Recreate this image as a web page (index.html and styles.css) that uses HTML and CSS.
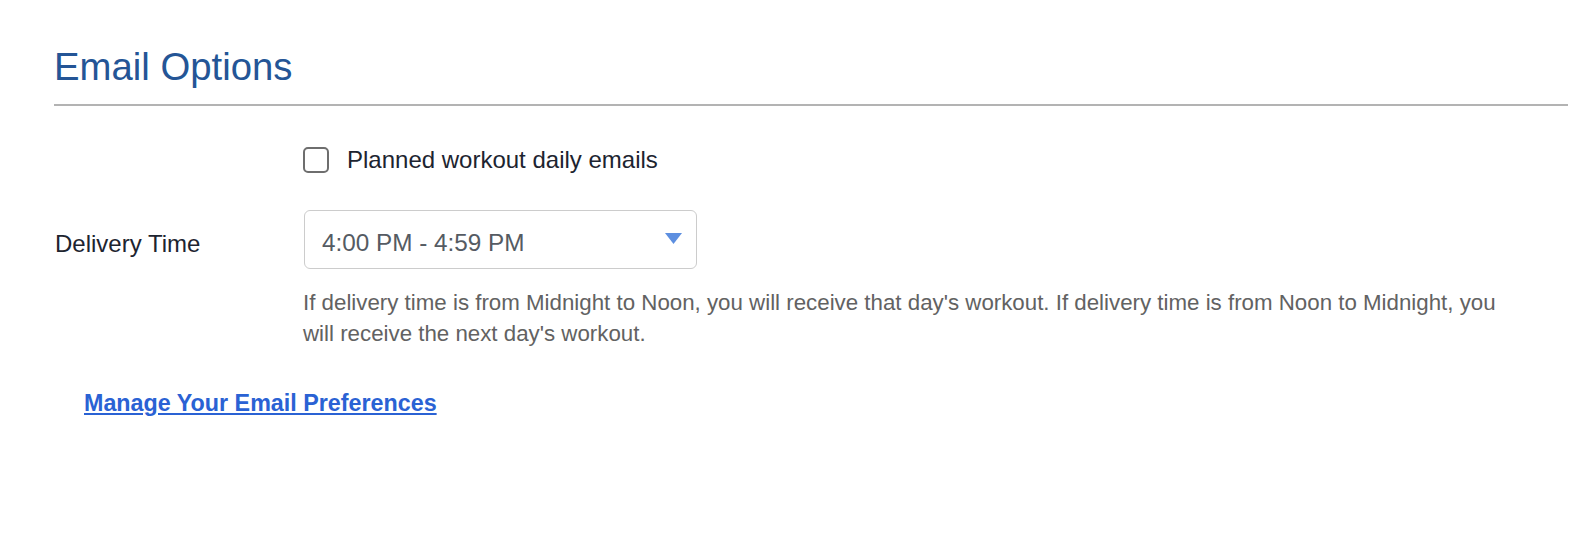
FILE: index.html
```html
<!DOCTYPE html>
<html lang="en">
<head>
    <meta charset="UTF-8">
    <meta name="viewport" content="width=device-width, initial-scale=1.0">
    <title>Email Options</title>
    <link rel="stylesheet" href="styles.css">
</head>
<body>
    <div class="page">
        <h1 class="section-title">Email Options</h1>

        <form class="options-form">
            <div class="form-row check-row">
                <div class="form-label"></div>
                <label class="check">
                    <input type="checkbox" class="check-box" name="dailyEmails">
                    <span>Planned workout daily emails</span>
                </label>
            </div>

            <div class="form-row">
                <label class="form-label time-label" for="deliveryTime">Delivery Time</label>
                <div class="form-field">
                    <div class="select-wrap">
                        <select id="deliveryTime" class="select">
                            <option>3:00 PM - 3:59 PM</option>
                            <option selected>4:00 PM - 4:59 PM</option>
                            <option>5:00 PM - 5:59 PM</option>
                        </select>
                        <!-- dropdown caret -->
                        <svg class="caret" width="17" height="11" viewBox="0 0 17 11">
                            <path d="M0 0 H17 L8.5 11 Z" fill="#5d8fe0"/>
                        </svg>
                    </div>
                    <p class="help">If delivery time is from Midnight to Noon, you will receive that day's workout. If delivery time is from Noon to Midnight, you will receive the next day's workout.</p>
                </div>
            </div>
        </form>

        <a class="prefs-link" href="#">Manage Your Email Preferences</a>
    </div>
</body>
</html>
```

FILE: styles.css
```css
/* Page */
body {
    margin: 0;
    font-family: "Liberation Sans", Arial, sans-serif;
    color: #1d2430;
    background: #ffffff;
}

.page {
    padding: 0 22px 0 54px;
}

/* Section heading */
.section-title {
    margin: 48px 0 0;
    padding-bottom: 18px;
    font-size: 38.3px;
    line-height: 38px;
    font-weight: normal;
    color: #245596;
    border-bottom: 2px solid #b3b3b3;
}

/* Form rows */
.options-form {
    margin-top: 41px;
}

.form-row {
    display: grid;
    grid-template-columns: 249px 1fr;
    align-items: start;
}

.check-row {
    margin-bottom: 37px;
}

.form-label {
    font-size: 24px;
    line-height: 26px;
}

.time-label {
    padding-top: 21px;
    padding-left: 1px;
}

.check {
    display: flex;
    align-items: center;
    gap: 18px;
    font-size: 24px;
    line-height: 26px;
    cursor: pointer;
}

.check-box {
    appearance: none;
    -webkit-appearance: none;
    margin: 0;
    width: 26px;
    height: 26px;
    border: 2px solid #6e6e6e;
    border-radius: 5px;
    background: #fff;
    box-sizing: border-box;
}

.check-box:checked {
    background: #2a62d4;
    border-color: #2a62d4;
}

/* Delivery time select */
.select-wrap {
    position: relative;
    width: 393px;
    margin-left: 1px;
}

.select {
    appearance: none;
    -webkit-appearance: none;
    width: 100%;
    height: 59px;
    box-sizing: border-box;
    padding: 5px 0 0 17px;
    font-family: inherit;
    font-size: 24.3px;
    color: #555b63;
    background: #fff;
    border: 1px solid #cccccc;
    border-radius: 6px;
}

.caret {
    position: absolute;
    right: 15px;
    top: 23px;
    pointer-events: none;
}

.help {
    margin: 18px 0 0;
    max-width: 1215px;
    font-size: 22.3px;
    line-height: 31px;
    color: #626262;
}

/* Preferences link */
.prefs-link {
    display: inline-block;
    margin: 41px 0 0 30px;
    font-size: 23.3px;
    line-height: 26px;
    font-weight: bold;
    color: #2a62d4;
}
```
